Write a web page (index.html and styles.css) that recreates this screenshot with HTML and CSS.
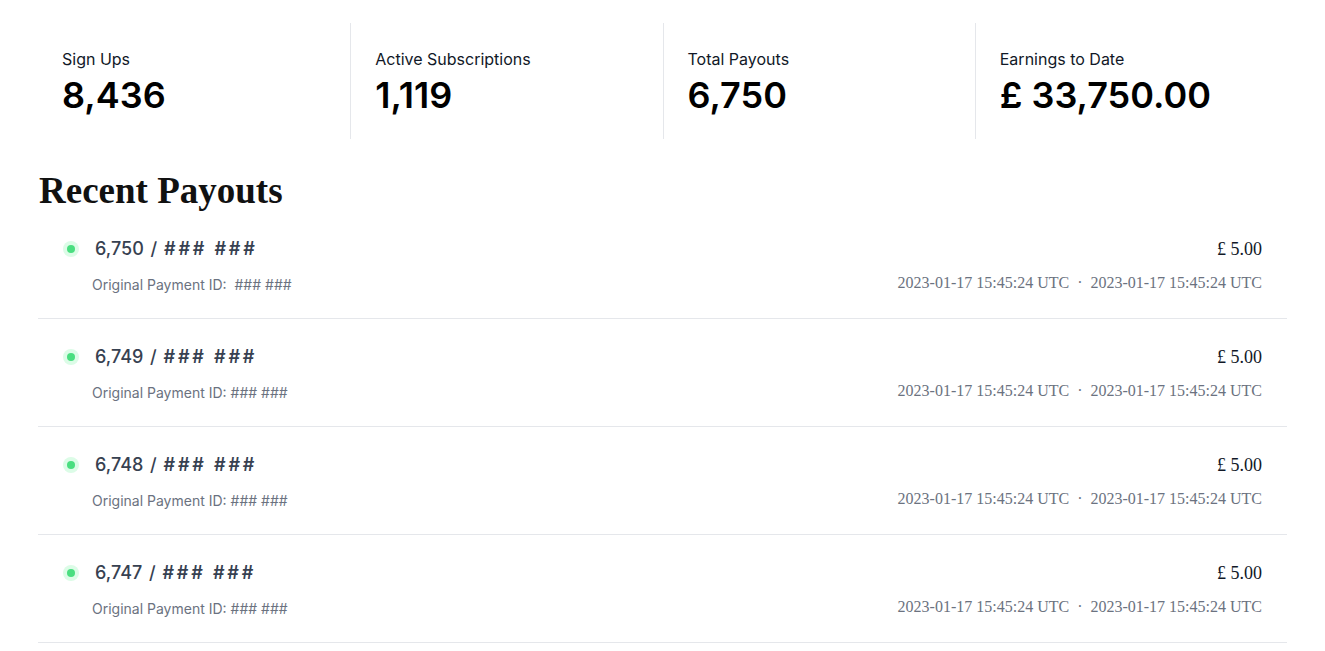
FILE: index.html
```html
<!DOCTYPE html>
<html lang="en">
<head>
    <meta charset="UTF-8">
    <meta name="viewport" content="width=device-width, initial-scale=1.0">
    <title>Payouts</title>
    <link rel="stylesheet" href="styles.css">
</head>
<body>

<main class="page">
    <section class="stats">
        <div class="stat">
            <div class="stat-label">Sign Ups</div>
            <div class="stat-value">8,436</div>
        </div>
        <div class="stat">
            <div class="stat-label">Active Subscriptions</div>
            <div class="stat-value">1,119</div>
        </div>
        <div class="stat">
            <div class="stat-label">Total Payouts</div>
            <div class="stat-value">6,750</div>
        </div>
        <div class="stat">
            <div class="stat-label">Earnings to Date</div>
            <div class="stat-value">£ 33,750.00</div>
        </div>
    </section>

    <h2 class="section-title">Recent Payouts</h2>

    <ul class="payouts">
        <li class="payout">
            <div class="payout-main">
                <div class="payout-head">
                    <span class="status-dot"></span>
                    <span class="payout-title">6,750 / <span class="hash">### ###</span></span>
                </div>
                <div class="payout-sub">Original Payment ID:&nbsp; ### ###</div>
            </div>
            <div class="payout-side">
                <div class="payout-amount">£ 5.00</div>
                <div class="payout-dates">2023-01-17 15:45:24 UTC <span class="sep">·</span> 2023-01-17 15:45:24 UTC</div>
            </div>
        </li>
        <li class="payout">
            <div class="payout-main">
                <div class="payout-head">
                    <span class="status-dot"></span>
                    <span class="payout-title">6,749 / <span class="hash">### ###</span></span>
                </div>
                <div class="payout-sub">Original Payment ID: ### ###</div>
            </div>
            <div class="payout-side">
                <div class="payout-amount">£ 5.00</div>
                <div class="payout-dates">2023-01-17 15:45:24 UTC <span class="sep">·</span> 2023-01-17 15:45:24 UTC</div>
            </div>
        </li>
        <li class="payout">
            <div class="payout-main">
                <div class="payout-head">
                    <span class="status-dot"></span>
                    <span class="payout-title">6,748 / <span class="hash">### ###</span></span>
                </div>
                <div class="payout-sub">Original Payment ID: ### ###</div>
            </div>
            <div class="payout-side">
                <div class="payout-amount">£ 5.00</div>
                <div class="payout-dates">2023-01-17 15:45:24 UTC <span class="sep">·</span> 2023-01-17 15:45:24 UTC</div>
            </div>
        </li>
        <li class="payout">
            <div class="payout-main">
                <div class="payout-head">
                    <span class="status-dot"></span>
                    <span class="payout-title">6,747 / <span class="hash">### ###</span></span>
                </div>
                <div class="payout-sub">Original Payment ID: ### ###</div>
            </div>
            <div class="payout-side">
                <div class="payout-amount">£ 5.00</div>
                <div class="payout-dates">2023-01-17 15:45:24 UTC <span class="sep">·</span> 2023-01-17 15:45:24 UTC</div>
            </div>
        </li>
    </ul>
</main>

</body>
</html>
```

FILE: styles.css
```css
body {
    font-family: Inter, "Noto Sans", sans-serif;
    background-color: #fff;
    color: #111827;
    margin: 0;
    padding: 0;
}
.page {
    padding: 23px 38px 0;
}
.stats {
    display: grid;
    grid-template-columns: repeat(4, 1fr);
}
.stat {
    padding: 24px;
    border-left: 1px solid #e5e7eb;
}
.stat:first-child {
    border-left: none;
}
.stat-label {
    font-size: 16px;
    line-height: 24px;
    color: #111827;
}
.stat-value {
    margin-top: 4px;
    font-size: 36px;
    line-height: 40px;
    font-weight: 600;
    color: #000;
}
.section-title {
    font-family: "Liberation Serif", "DejaVu Serif", serif;
    font-size: 37px;
    line-height: 40px;
    font-weight: 700;
    margin: 32px 0 0 1px;
    color: #111;
}
.payouts {
    list-style: none;
    margin: 0;
    padding: 0;
}
.payout {
    display: flex;
    justify-content: space-between;
    padding: 24px 25px 23px 25px;
    border-bottom: 1px solid #e5e7eb;
}
.payout-head {
    display: flex;
    align-items: center;
    gap: 16px;
}
.status-dot {
    width: 16px;
    height: 16px;
    border-radius: 50%;
    background-color: #dcfce7;
    display: flex;
    align-items: center;
    justify-content: center;
}
.status-dot::after {
    content: "";
    width: 8px;
    height: 8px;
    border-radius: 50%;
    background-color: #4ade80;
}
.payout-title {
    font-size: 18px;
    line-height: 28px;
    font-weight: 500;
    color: #374151;
    word-spacing: 2px;
}
.hash {
    font-weight: 600;
    letter-spacing: 2.8px;
    word-spacing: 0;
}
.payout-sub {
    margin-top: 12px;
    padding-left: 29px;
    font-size: 14px;
    line-height: 20px;
    color: #6b7280;
}
.payout-side {
    text-align: right;
    font-family: "Liberation Serif", "DejaVu Serif", serif;
}
.payout-amount {
    font-size: 18px;
    line-height: 28px;
    color: #111827;
}
.payout-dates {
    margin-top: 10px;
    font-size: 16px;
    line-height: 20px;
    color: #6b7280;
}
.sep {
    margin: 0 4px;
}
```
